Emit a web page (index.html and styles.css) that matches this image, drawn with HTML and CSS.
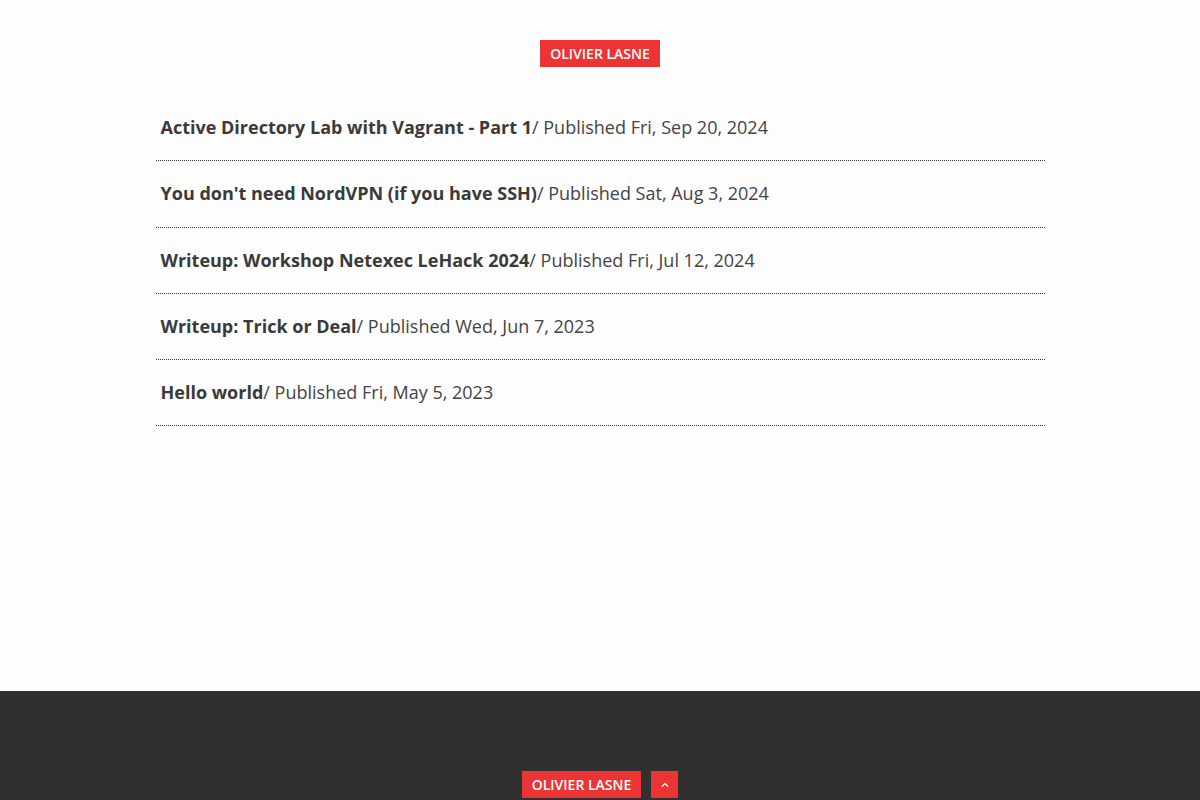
FILE: index.html
```html
<!DOCTYPE html>
<html lang="en">
<head>
    <meta charset="UTF-8">
    <meta name="viewport" content="width=device-width, initial-scale=1.0">
    <title>Olivier Lasne</title>
    <link rel="stylesheet" href="styles.css">
</head>
<body>

<header class="header">
    <a class="badge" href="#">OLIVIER LASNE</a>
</header>

<main class="main">
    <ul class="posts">
        <li class="post"><a href="#" class="post-title">Active Directory Lab with Vagrant - Part 1</a>/ Published Fri, Sep 20, 2024</li>
        <li class="post"><a href="#" class="post-title">You don't need NordVPN (if you have SSH)</a>/ Published Sat, Aug 3, 2024</li>
        <li class="post"><a href="#" class="post-title">Writeup: Workshop Netexec LeHack 2024</a>/ Published Fri, Jul 12, 2024</li>
        <li class="post"><a href="#" class="post-title">Writeup: Trick or Deal</a>/ Published Wed, Jun 7, 2023</li>
        <li class="post"><a href="#" class="post-title">Hello world</a>/ Published Fri, May 5, 2023</li>
    </ul>
</main>

<footer class="footer">
    <a class="badge" href="#">OLIVIER LASNE</a>
    <a class="badge to-top" href="#">
        <svg width="10" height="10" viewBox="0 0 10 10">
            <path d="M2 6.5 L5 3.5 L8 6.5" fill="none" stroke="#fff" stroke-width="1.4"/>
        </svg>
    </a>
</footer>

</body>
</html>
```

FILE: styles.css
```css
body {
    margin: 0;
    background-color: #fdfdfd;
    font-family: "Open Sans", "Liberation Sans", sans-serif;
    color: #444;
}

a {
    text-decoration: none;
}

.badge {
    display: inline-flex;
    align-items: center;
    justify-content: center;
    height: 27px;
    padding: 0 10px;
    background-color: #ec3434;
    color: #fff;
    font-size: 14px;
    font-weight: 600;
    box-sizing: border-box;
}

.header {
    padding-top: 40px;
    text-align: center;
}

.main {
    min-height: 624px;
    padding-top: 28px;
    box-sizing: border-box;
}

.posts {
    list-style: none;
    width: 889px;
    margin: 0 auto;
    padding: 0;
}

.post {
    padding: 19px 5px 19.25px;
    font-size: 18px;
    line-height: 27px;
    border-bottom: 1px dotted #333;
}

.post-title {
    color: #3a3a3a;
    font-weight: 700;
}

.footer {
    background-color: #303030;
    padding-top: 80px;
    height: 109px;
    box-sizing: border-box;
    display: flex;
    justify-content: center;
    align-items: flex-start;
    gap: 10px;
}

.to-top {
    width: 27px;
    padding: 0;
}
```
